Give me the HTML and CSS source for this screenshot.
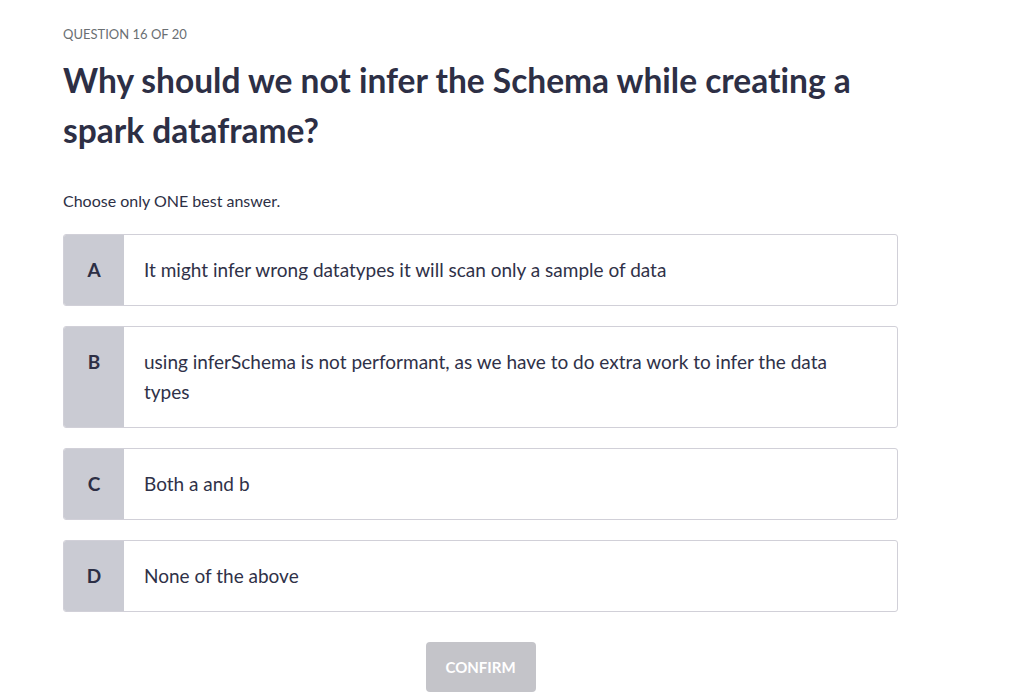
FILE: index.html
```html
<!DOCTYPE html>
<html lang="en">
<head>
<meta charset="utf-8">
<title>Quiz</title>
<link rel="stylesheet" href="styles.css">
</head>
<body>
<main class="quiz">
  <div class="counter">QUESTION 16 OF 20</div>
  <h1 class="question">Why should we not infer the Schema while creating a spark dataframe?</h1>
  <p class="hint">Choose only ONE best answer.</p>
  <div class="options">
    <div class="option"><div class="letter">A</div><div class="text">It might infer wrong datatypes it will scan only a sample of data</div></div>
    <div class="option"><div class="letter">B</div><div class="text">using inferSchema is not performant, as we have to do extra work to infer the data types</div></div>
    <div class="option"><div class="letter">C</div><div class="text">Both a and b</div></div>
    <div class="option"><div class="letter">D</div><div class="text">None of the above</div></div>
  </div>
  <div class="actions"><button class="confirm" disabled>CONFIRM</button></div>
</main>
</body>
</html>
```
FILE: styles.css
```css
html, body { margin: 0; padding: 0; background: #fff; }
body { font-family: "Lato", "Liberation Sans", sans-serif; color: #2d2f45; font-variant-ligatures: none; }
.quiz { width: 835px; padding: 25px 0 0 63px; }
.counter { font-size: 13px; color: #6a6f73; line-height: 18px; }
.question { font-size: 33.5px; font-weight: 700; line-height: 50px; margin: 12px 0 0; width: 810px; }
.hint { font-size: 16px; line-height: 22px; margin: 35px 0 0; }
.options { display: flex; flex-direction: column; gap: 20px; margin-top: 22px; }
.option { display: flex; border: 1px solid #d1d0d8; border-radius: 3px; overflow: hidden; background: #fff; }
.letter { width: 60px; flex: none; background: #cacbd3; padding-top: 20px; box-sizing: border-box; text-align: center; line-height: 30px; font-weight: 700; font-size: 19px; }
.text { padding: 20px 70px 20px 20px; font-size: 19px; line-height: 30px; color: #2f3148; }
.actions { display: flex; justify-content: center; margin-top: 30px; }
.confirm { width: 110px; height: 50px; border: none; border-radius: 4px; background: #c4c4c9; color: #fff; font-family: inherit; font-weight: 700; font-size: 15px; }
```
